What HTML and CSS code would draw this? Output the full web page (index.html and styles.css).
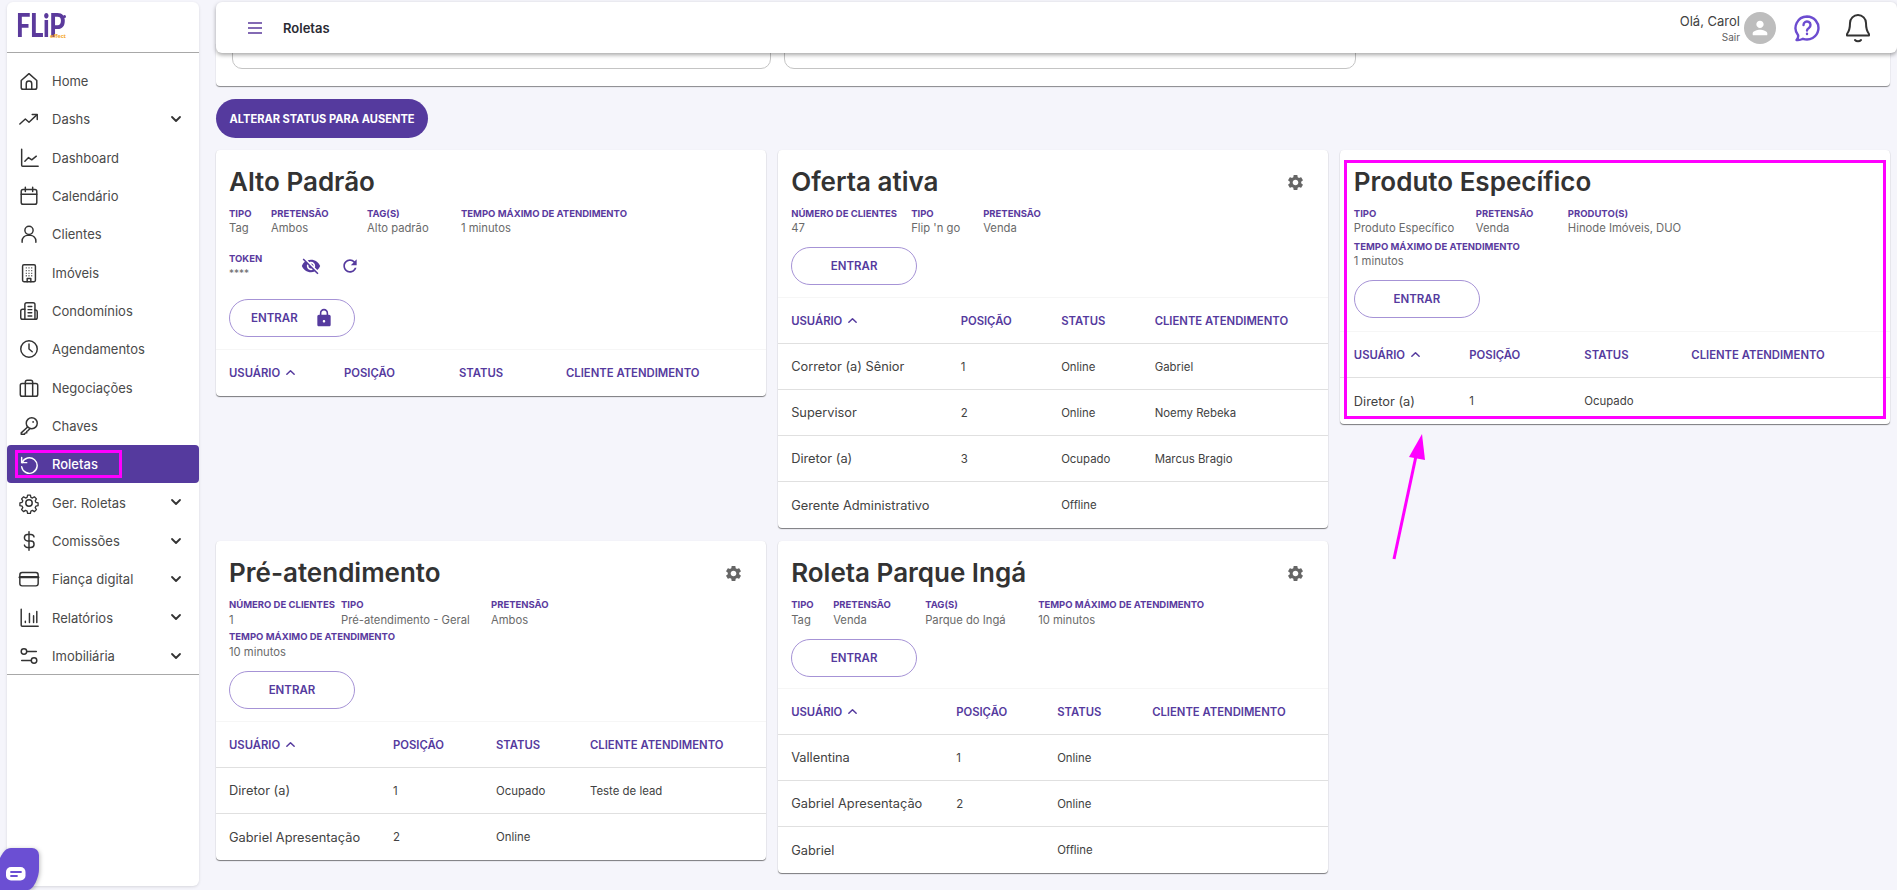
FILE: index.html
```html
<!DOCTYPE html>
<html lang="pt-BR">
<head>
<meta charset="utf-8">
<title>Roletas</title>
<link rel="stylesheet" href="styles.css">
</head>
<body>
<aside class="sidebar">
  <div class="logo"><span class="logo-flip">FLiP</span><span class="logo-dot"></span><span class="logo-effect">effect</span></div>
  <nav class="nav">
    <a class="nav-item"><svg class="ni" viewBox="0 0 24 24"><path d="M3.500 11.500 12 4l8.500 7.500V19a2 2 0 0 1-2 2h-13a2 2 0 0 1-2-2z"/><path d="M9 21v-6a3 3 0 0 1 6 0v6"/></svg><span>Home</span></a>
    <a class="nav-item"><svg class="ni" viewBox="0 0 24 24"><path d="m2 17.500 6-5.500 4 3.500 8.500-8"/><path d="M15.500 7H21v5.500"/></svg><span>Dashs</span><svg class="chev" viewBox="0 0 12 12"><path d="m2 4 4 4 4-4"/></svg></a>
    <a class="nav-item"><svg class="ni" viewBox="0 0 24 24"><path d="M4 2.500V20a1 1 0 0 0 1 1h17"/><path d="m7.500 15.500 4-4 3.500 2.500 5-4"/></svg><span>Dashboard</span></a>
    <a class="nav-item"><svg class="ni" viewBox="0 0 24 24"><rect x="3.500" y="5" width="17" height="16" rx="2"/><path d="M3.500 10h17M8 2.500V7M16 2.500V7"/></svg><span>Calendário</span></a>
    <a class="nav-item"><svg class="ni" viewBox="0 0 24 24"><circle cx="12" cy="8" r="4.500"/><path d="M4.500 21v-1.500a6 6 0 0 1 6-6h3a6 6 0 0 1 6 6V21"/></svg><span>Clientes</span></a>
    <a class="nav-item"><svg class="ni" viewBox="0 0 24 24"><rect x="5" y="3" width="14" height="18.500" rx="1.500"/><path d="M10 21.500V18h4v3.500"/><path class="dots" d="M8.500 6.500h1M11.500 6.500h1M14.500 6.500h1M8.500 9.500h1M11.500 9.500h1M14.500 9.500h1M8.500 12.500h1M11.500 12.500h1M14.500 12.500h1M8.500 15h1M11.500 15h1M14.500 15h1"/></svg><span>Imóveis</span></a>
    <a class="nav-item"><svg class="ni" viewBox="0 0 24 24"><path d="M7.500 21V5a2 2 0 0 1 2-2h7a2 2 0 0 1 2 2v16"/><path d="M7.500 10H5a2 2 0 0 0-2 2v7a2 2 0 0 0 2 2h14a2 2 0 0 0 2-2v-6a2 2 0 0 0-2.500-2"/><path d="M11 7h4M11 10.500h4M11 14h4M11 17.500h4"/></svg><span>Condomínios</span></a>
    <a class="nav-item"><svg class="ni" viewBox="0 0 24 24"><circle cx="12" cy="12" r="9"/><path d="M12 6.500V12l3.500 3"/></svg><span>Agendamentos</span></a>
    <a class="nav-item"><svg class="ni" viewBox="0 0 24 24"><rect x="2.500" y="7" width="19" height="14" rx="2"/><path d="M8 21V5.500a2 2 0 0 1 2-2h4a2 2 0 0 1 2 2V21"/></svg><span>Negociações</span></a>
    <a class="nav-item"><svg class="ni" viewBox="0 0 24 24"><circle cx="15" cy="9" r="6"/><path d="m10.500 13-7 6.500V21H7l1-1.500h1.500V18l1.500-1 2-2"/><circle class="dotfill" cx="16.500" cy="7.500" r="1"/></svg><span>Chaves</span></a>
    <a class="nav-item active"><svg class="ni" viewBox="0 0 24 24"><path d="M4 5v5.500h5.500"/><path d="M4.500 10.500A8.500 8.500 0 1 1 4 15"/></svg><span>Roletas</span><i class="mark-nav"></i></a>
    <a class="nav-item"><svg class="ni" viewBox="0 0 24 24"><path d="M10.300 2.500h3.400l.6 2.700 1.900.8 2.300-1.500 2.500 2.500-1.500 2.300.8 1.900 2.700.6v3.400l-2.700.6-.8 1.900 1.500 2.300-2.500 2.500-2.300-1.500-1.900.8-.6 2.700h-3.400l-.6-2.700-1.900-.8-2.300 1.500-2.500-2.500 1.500-2.300-.8-1.900-2.700-.6v-3.400l2.700-.6.8-1.900-1.500-2.300 2.500-2.500 2.300 1.500 1.900-.8z" transform="translate(1.200 1.200) scale(.9)"/><circle cx="12" cy="12" r="3.500"/></svg><span>Ger. Roletas</span><svg class="chev" viewBox="0 0 12 12"><path d="m2 4 4 4 4-4"/></svg></a>
    <a class="nav-item"><svg class="ni" viewBox="0 0 24 24"><path d="M17.500 7.500A3.500 3.500 0 0 0 14 5h-3.500a3.500 3.500 0 0 0 0 7h3.500a3.500 3.500 0 0 1 0 7h-3.500A3.500 3.500 0 0 1 7 16.500"/><path d="M12 2v20"/></svg><span>Comissões</span><svg class="chev" viewBox="0 0 12 12"><path d="m2 4 4 4 4-4"/></svg></a>
    <a class="nav-item"><svg class="ni" viewBox="0 0 24 24"><rect x="2" y="5" width="20" height="14.500" rx="2.500"/><path d="M2 10h20" class="thick"/></svg><span>Fiança digital</span><svg class="chev" viewBox="0 0 12 12"><path d="m2 4 4 4 4-4"/></svg></a>
    <a class="nav-item"><svg class="ni" viewBox="0 0 24 24"><path d="M3.500 2.500V20a1 1 0 0 0 1 1H22"/><path d="M8 15.500v1.500M12.500 7v10M17 9.500V17M20.500 5v12"/></svg><span>Relatórios</span><svg class="chev" viewBox="0 0 12 12"><path d="m2 4 4 4 4-4"/></svg></a>
    <a class="nav-item"><svg class="ni" viewBox="0 0 24 24"><circle cx="6.500" cy="7" r="3"/><path d="M9.500 7H20"/><circle cx="17.500" cy="17" r="3"/><path d="M14.500 17H4"/></svg><span>Imobiliária</span><svg class="chev" viewBox="0 0 12 12"><path d="m2 4 4 4 4-4"/></svg></a>
  </nav>
</aside>

<main class="main">
  <header class="topbar">
    <svg class="menu" viewBox="0 0 16 14"><path d="M1 2h14M1 7h14M1 12h14"/></svg>
    <h1 class="page-title">Roletas</h1>
    <div class="user">
      <div class="user-text"><span class="hello">Olá, Carol</span><span class="logout">Sair</span></div>
      <div class="avatar"><svg viewBox="0 0 24 24"><path d="M12 12c2.210 0 4-1.790 4-4s-1.790-4-4-4-4 1.790-4 4 1.790 4 4 4zm0 2c-2.670 0-8 1.340-8 4v1a1 1 0 0 0 1 1h14a1 1 0 0 0 1-1v-1c0-2.660-5.330-4-8-4z"/></svg></div>
      <svg class="help" viewBox="0 0 28 28"><path d="M14 2.500A11.500 11.500 0 1 1 10 24.800c-2 1-4.500 1.500-6.500 1.200 1.300-1.300 1.900-3 1.600-4.800A11.500 11.500 0 0 1 14 2.500z"/><path d="M10.500 11a3.500 3.500 0 1 1 5.400 2.900c-1.100.7-1.900 1.400-1.900 2.600"/><path d="M14 19.800v.2"/></svg>
      <svg class="bell" viewBox="0 0 26 30"><path d="M13 2a8 8 0 0 0-8 8c0 6-1 8.500-3 11v1.500h22V21c-2-2.500-3-5-3-11a8 8 0 0 0-8-8z"/><path d="M10 27c1.500 1.600 4.500 1.600 6 0"/></svg>
    </div>
  </header>

  <section class="filters"><div class="filter-box f1"></div><div class="filter-box f2"></div></section>
  <button class="status-btn">ALTERAR STATUS PARA AUSENTE</button>

  <div class="grid">
    <article class="card">
      <div class="card-head"><h2>Alto Padrão</h2></div>
      <div class="meta">
        <div class="m w42"><b>Tipo</b><span>Tag</span></div>
        <div class="m w96"><b>Pretensão</b><span>Ambos</span></div>
        <div class="m w94"><b>Tag(s)</b><span>Alto padrão</span></div>
        <div class="m"><b>Tempo máximo de atendimento</b><span>1 minutos</span></div>
      </div>
      <div class="token">
        <div class="m"><b>Token</b><span class="stars">****</span></div>
        <svg class="tk-icon eye" viewBox="0 0 24 24"><path d="M12 7c2.760 0 5 2.240 5 5 0 .65-.13 1.260-.36 1.830l2.920 2.920c1.510-1.260 2.700-2.890 3.430-4.750-1.730-4.390-6-7.500-11-7.500-1.400 0-2.740.25-3.980.7l2.160 2.160C10.740 7.130 11.350 7 12 7zM2 4.270l2.280 2.280.46.46C3.080 8.300 1.780 10.020 1 12c1.730 4.390 6 7.500 11 7.500 1.550 0 3.030-.3 4.380-.84l.42.42L19.730 22 21 20.730 3.270 3 2 4.270zM7.530 9.800l1.550 1.550c-.05.21-.08.43-.08.65 0 1.660 1.340 3 3 3 .22 0 .44-.03.65-.08l1.550 1.550c-.67.33-1.410.53-2.200.53-2.760 0-5-2.240-5-5 0-.79.2-1.530.53-2.200zm4.310-.78l3.150 3.150.02-.16c0-1.660-1.340-3-3-3l-.17.01z"/></svg>
        <svg class="tk-icon refresh" viewBox="0 0 24 24"><path d="M17.650 6.350C16.200 4.900 14.210 4 12 4c-4.420 0-7.990 3.580-7.990 8s3.570 8 7.990 8c3.730 0 6.840-2.550 7.730-6h-2.080c-.82 2.330-3.040 4-5.650 4-3.310 0-6-2.690-6-6s2.690-6 6-6c1.660 0 3.140.69 4.220 1.780L13 11h7V4l-2.350 2.350z"/></svg>
      </div>
      <button class="enter enter-lock">ENTRAR<svg viewBox="0 0 24 24"><path d="M18 8h-1V6c0-2.760-2.240-5-5-5S7 3.240 7 6v2H6c-1.100 0-2 .9-2 2v10c0 1.100.9 2 2 2h12c1.100 0 2-.9 2-2V10c0-1.100-.9-2-2-2zm-6 9.500c-.83 0-1.500-.67-1.500-1.500s.67-1.500 1.500-1.500 1.500.67 1.500 1.500-.67 1.500-1.500 1.500zM15.100 8H8.900V6c0-1.710 1.390-3.100 3.100-3.100 1.710 0 3.100 1.390 3.100 3.100v2z"/></svg></button>
      <table class="tbl t1">
        <colgroup><col><col><col><col></colgroup>
        <thead><tr><th>Usuário<svg class="sort" viewBox="0 0 12 12"><path d="m2 8 4-4 4 4"/></svg></th><th>Posição</th><th>Status</th><th>Cliente atendimento</th></tr></thead>
      </table>
    </article>

    <article class="card">
      <div class="card-head"><h2>Oferta ativa</h2><svg class="gear" viewBox="0 0 24 24"><path d="M19.140 12.940c.04-.3.06-.61.06-.94 0-.32-.02-.64-.07-.94l2.030-1.580c.18-.14.23-.41.12-.61l-1.920-3.320c-.12-.22-.37-.29-.59-.22l-2.390.96c-.5-.38-1.030-.7-1.620-.94l-.36-2.540c-.04-.24-.24-.41-.48-.41h-3.840c-.24 0-.43.17-.47.41l-.36 2.540c-.59.24-1.130.57-1.620.94l-2.390-.96c-.22-.08-.47 0-.59.22L2.740 8.870c-.12.21-.08.47.12.61l2.030 1.580c-.05.3-.09.63-.09.94s.02.64.07.94l-2.030 1.580c-.18.14-.23.41-.12.61l1.920 3.320c.12.22.37.29.59.22l2.390-.96c.5.38 1.030.7 1.620.94l.36 2.540c.05.24.24.41.48.41h3.840c.24 0 .44-.17.47-.41l.36-2.540c.59-.24 1.130-.56 1.620-.94l2.390.96c.22.08.47 0 .59-.22l1.920-3.320c.12-.22.07-.47-.12-.61l-2.010-1.580zM12 15.600c-1.980 0-3.600-1.620-3.600-3.600s1.620-3.600 3.600-3.600 3.600 1.620 3.600 3.600-1.620 3.600-3.600 3.600z"/></svg></div>
      <div class="meta">
        <div class="m w120"><b>Número de clientes</b><span>47</span></div>
        <div class="m w72"><b>Tipo</b><span>Flip 'n go</span></div>
        <div class="m"><b>Pretensão</b><span>Venda</span></div>
      </div>
      <button class="enter">ENTRAR</button>
      <table class="tbl t2">
        <colgroup><col><col><col><col></colgroup>
        <thead><tr><th>Usuário<svg class="sort" viewBox="0 0 12 12"><path d="m2 8 4-4 4 4"/></svg></th><th>Posição</th><th>Status</th><th>Cliente atendimento</th></tr></thead>
        <tbody>
          <tr><td>Corretor (a) Sênior</td><td>1</td><td>Online</td><td>Gabriel</td></tr>
          <tr><td>Supervisor</td><td>2</td><td>Online</td><td>Noemy Rebeka</td></tr>
          <tr><td>Diretor (a)</td><td>3</td><td>Ocupado</td><td>Marcus Bragio</td></tr>
          <tr><td>Gerente Administrativo</td><td></td><td>Offline</td><td></td></tr>
        </tbody>
      </table>
    </article>

    <article class="card">
      <div class="card-head"><h2>Produto Específico</h2></div>
      <div class="meta">
        <div class="m w122"><b>Tipo</b><span>Produto Específico</span></div>
        <div class="m w92"><b>Pretensão</b><span>Venda</span></div>
        <div class="m"><b>Produto(s)</b><span>Hinode Imóveis, DUO</span></div>
      </div>
      <div class="meta meta-next">
        <div class="m"><b>Tempo máximo de atendimento</b><span>1 minutos</span></div>
      </div>
      <button class="enter">ENTRAR</button>
      <table class="tbl t3">
        <colgroup><col><col><col><col></colgroup>
        <thead><tr><th>Usuário<svg class="sort" viewBox="0 0 12 12"><path d="m2 8 4-4 4 4"/></svg></th><th>Posição</th><th>Status</th><th>Cliente atendimento</th></tr></thead>
        <tbody>
          <tr><td>Diretor (a)</td><td>1</td><td>Ocupado</td><td></td></tr>
        </tbody>
      </table>
      <i class="mark-card"></i>
    </article>

    <article class="card loose">
      <div class="card-head"><h2>Pré-atendimento</h2><svg class="gear" viewBox="0 0 24 24"><path d="M19.140 12.940c.04-.3.06-.61.06-.94 0-.32-.02-.64-.07-.94l2.030-1.580c.18-.14.23-.41.12-.61l-1.920-3.320c-.12-.22-.37-.29-.59-.22l-2.390.96c-.5-.38-1.030-.7-1.620-.94l-.36-2.540c-.04-.24-.24-.41-.48-.41h-3.840c-.24 0-.43.17-.47.41l-.36 2.540c-.59.24-1.130.57-1.620.94l-2.390-.96c-.22-.08-.47 0-.59.22L2.740 8.870c-.12.21-.08.47.12.61l2.030 1.580c-.05.3-.09.63-.09.94s.02.64.07.94l-2.030 1.580c-.18.14-.23.41-.12.61l1.920 3.320c.12.22.37.29.59.22l2.390-.96c.5.38 1.030.7 1.620.94l.36 2.540c.05.24.24.41.48.41h3.840c.24 0 .44-.17.47-.41l.36-2.540c.59-.24 1.130-.56 1.620-.94l2.390.96c.22.08.47 0 .59-.22l1.920-3.320c.12-.22.07-.47-.12-.61l-2.010-1.580zM12 15.600c-1.980 0-3.600-1.620-3.600-3.600s1.620-3.600 3.600-3.600 3.600 1.620 3.600 3.600-1.620 3.600-3.600 3.600z"/></svg></div>
      <div class="meta">
        <div class="m w112"><b>Número de clientes</b><span>1</span></div>
        <div class="m w150"><b>Tipo</b><span>Pré-atendimento - Geral</span></div>
        <div class="m"><b>Pretensão</b><span>Ambos</span></div>
      </div>
      <div class="meta meta-next">
        <div class="m"><b>Tempo máximo de atendimento</b><span>10 minutos</span></div>
      </div>
      <button class="enter">ENTRAR</button>
      <table class="tbl t4">
        <colgroup><col><col><col><col></colgroup>
        <thead><tr><th>Usuário<svg class="sort" viewBox="0 0 12 12"><path d="m2 8 4-4 4 4"/></svg></th><th>Posição</th><th>Status</th><th>Cliente atendimento</th></tr></thead>
        <tbody>
          <tr><td>Diretor (a)</td><td>1</td><td>Ocupado</td><td>Teste de lead</td></tr>
          <tr><td>Gabriel Apresentação</td><td>2</td><td>Online</td><td></td></tr>
        </tbody>
      </table>
    </article>

    <article class="card loose">
      <div class="card-head"><h2>Roleta Parque Ingá</h2><svg class="gear" viewBox="0 0 24 24"><path d="M19.140 12.940c.04-.3.06-.61.06-.94 0-.32-.02-.64-.07-.94l2.030-1.580c.18-.14.23-.41.12-.61l-1.920-3.320c-.12-.22-.37-.29-.59-.22l-2.390.96c-.5-.38-1.030-.7-1.620-.94l-.36-2.540c-.04-.24-.24-.41-.48-.41h-3.840c-.24 0-.43.17-.47.41l-.36 2.540c-.59.24-1.130.57-1.620.94l-2.390-.96c-.22-.08-.47 0-.59.22L2.740 8.870c-.12.21-.08.47.12.61l2.030 1.580c-.05.3-.09.63-.09.94s.02.64.07.94l-2.030 1.580c-.18.14-.23.41-.12.61l1.920 3.320c.12.22.37.29.59.22l2.390-.96c.5.38 1.030.7 1.620.94l.36 2.540c.05.24.24.41.48.41h3.840c.24 0 .44-.17.47-.41l.36-2.540c.59-.24 1.130-.56 1.620-.94l2.390.96c.22.08.47 0 .59-.22l1.920-3.320c.12-.22.07-.47-.12-.61l-2.010-1.580zM12 15.600c-1.980 0-3.600-1.620-3.600-3.600s1.620-3.600 3.600-3.600 3.600 1.620 3.600 3.600-1.620 3.600-3.600 3.600z"/></svg></div>
      <div class="meta">
        <div class="m w42"><b>Tipo</b><span>Tag</span></div>
        <div class="m w92"><b>Pretensão</b><span>Venda</span></div>
        <div class="m w113"><b>Tag(s)</b><span>Parque do Ingá</span></div>
        <div class="m"><b>Tempo máximo de atendimento</b><span>10 minutos</span></div>
      </div>
      <button class="enter">ENTRAR</button>
      <table class="tbl t5">
        <colgroup><col><col><col><col></colgroup>
        <thead><tr><th>Usuário<svg class="sort" viewBox="0 0 12 12"><path d="m2 8 4-4 4 4"/></svg></th><th>Posição</th><th>Status</th><th>Cliente atendimento</th></tr></thead>
        <tbody>
          <tr><td>Vallentina</td><td>1</td><td>Online</td><td></td></tr>
          <tr><td>Gabriel Apresentação</td><td>2</td><td>Online</td><td></td></tr>
          <tr><td>Gabriel</td><td></td><td>Offline</td><td></td></tr>
        </tbody>
      </table>
    </article>
  </div>
</main>

<svg class="arrow" viewBox="0 0 40 130"><path d="M4 127 26 24"/><polygon points="32,2 19,25 35,28"/></svg>

<div class="chat"><svg viewBox="0 0 39 42"><path class="chat-shape" d="M11 0h21a7 7 0 0 1 7 7v14c0 9-6 21-11 21H0V10C3 4 6 0 11 0z"/><rect class="chat-bubble" x="6" y="19" width="19.500" height="13.500" rx="5"/><path class="chat-line" d="M11 24h10M11 28h6"/></svg></div>
</body>
</html>
```

FILE: styles.css
```css
* { box-sizing: border-box; }
html, body { margin: 0; height: 890px; overflow: hidden; }
body {
  display: flex;
  background: #f5f5fb;
  font-family: Inter, "Liberation Sans", sans-serif;
  color: #424242;
  position: relative;
}
h1, h2 { margin: 0; }

/* sidebar */
.sidebar {
  width: 192px;
  height: 884px;
  margin: 2px 0 0 7px;
  background: #fff;
  border-radius: 6px;
  box-shadow: 0 1px 3px rgba(0,0,0,.12);
  flex: none;
}
.logo {
  height: 51px;
  border-bottom: 1px solid #a8a8a8;
  position: relative;
}
.logo-flip {
  position: absolute;
  left: 9px;
  top: 13px;
  font: 900 32px/19px Lato, sans-serif;
  color: #5b3a9c;
  transform: scaleX(.8);
  transform-origin: left center;
  letter-spacing: -.5px;
}
.logo-dot {
  position: absolute; left: 56px; top: 13px;
  width: 3px; height: 3px; border-radius: 2px; background: #5b3a9c;
}
.logo-effect {
  position: absolute; left: 43px; top: 31px;
  font: 700 5.5px/7px "Open Sans", sans-serif;
  color: #f5a623;
}
.nav {
  padding-top: 8.8px;
  height: 622px;
  border-bottom: 1px solid #a8a8a8;
}
.nav-item {
  height: 38.33px;
  display: flex;
  align-items: center;
  padding-left: 11px;
  font-size: 13px;
  color: #4a4a4a;
  position: relative;
}
.nav-item > span { margin-left: 12px; }
.ni {
  width: 22px; height: 22px; flex: none;
  fill: none; stroke: #333; stroke-width: 1.6;
  stroke-linecap: round; stroke-linejoin: round;
}
.ni .dots { stroke-width: 1.4; stroke-linecap: butt; }
.ni .dotfill { fill: #333; stroke: none; }
.ni .thick { stroke-width: 2.6; }
.chev {
  position: absolute; left: 163px; top: 13px;
  width: 12px; height: 12px;
  fill: none; stroke: #333; stroke-width: 1.8;
  stroke-linecap: round; stroke-linejoin: round;
}
.nav-item.active {
  background: #553a9e;
  color: #fff;
  border-radius: 4px;
  font-weight: 500;
}
.nav-item.active .ni { stroke: #fff; }
.mark-nav {
  position: absolute; left: 8px; top: 5px;
  width: 107px; height: 28px;
  border: 3px solid #ff00ff;
}

/* main */
.main {
  flex: 1;
  margin-left: 17px;
  min-width: 0;
}
.topbar {
  position: relative;
  z-index: 2;
  height: 51px;
  margin-top: 2px;
  background: #fff;
  border-radius: 6px;
  box-shadow: 0 2px 4px rgba(0,0,0,.35);
  display: flex;
  align-items: center;
  padding: 0 26px 0 31px;
}
.menu {
  width: 16px; height: 14px; flex: none;
  fill: none; stroke: #5b3a9c; stroke-width: 1.6;
}
.page-title {
  margin-left: 20px;
  font-size: 13px;
  font-weight: 600;
  color: #2b2b33;
}
.user { margin-left: auto; display: flex; align-items: center; }
.user-text { display: flex; flex-direction: column; align-items: flex-end; margin-right: 4px; }
.hello { font-size: 13px; line-height: 18px; color: #424242; }
.logout { font-size: 10px; line-height: 14px; color: #616161; }
.avatar {
  width: 32px; height: 32px; border-radius: 50%;
  background: #bdbdbd;
  display: flex; align-items: center; justify-content: center;
}
.avatar svg { width: 22px; height: 22px; fill: #fff; }
.help {
  width: 28px; height: 28px; margin-left: 17px;
  fill: none; stroke: #6c4cd0; stroke-width: 2.4;
  stroke-linecap: round; stroke-linejoin: round;
}
.bell {
  width: 26px; height: 30px; margin-left: 24px;
  fill: none; stroke: #333; stroke-width: 2;
  stroke-linecap: round; stroke-linejoin: round;
}

.filters {
  margin: -10px 7px 0 0;
  height: 43px;
  padding: 0 16px;
  background: #fff;
  border-radius: 0 0 4px 4px;
  box-shadow: 0 1px 1px rgba(0,0,0,.45);
  display: flex;
  gap: 13px;
}
.filter-box {
  height: 26px;
  border: 1px solid #c4c4c4;
  border-radius: 0 0 10px 10px;
}
.f1 { width: 539px; }
.f2 { width: 572px; }

.status-btn {
  display: block;
  margin-top: 13px;
  width: 212px;
  height: 39px;
  border: 0;
  border-radius: 20px;
  background: #553a9e;
  color: #fff;
  font: 700 11.1px Inter, sans-serif;
  padding: 0;
}

.grid {
  margin: 12px 7px 0 0;
  display: grid;
  grid-template-columns: repeat(3, 1fr);
  gap: 13px 12.5px;
  align-items: start;
}
.card {
  --pad: 13px;
  position: relative;
  background: #fff;
  border-radius: 4px;
  box-shadow: 0 1px 1px rgba(0,0,0,.5), 0 0 1px rgba(0,0,0,.08);
  padding-top: 16px;
}
.card:nth-child(3) { --pad: 13.5px; }
.card-head {
  display: flex;
  justify-content: space-between;
  align-items: center;
  height: 32px;
  padding: 0 23px 0 var(--pad);
}
.card-head h2 {
  font-size: 26px;
  line-height: 32px;
  font-weight: 600;
  color: #333;
  white-space: nowrap;
}
.gear { width: 19px; height: 19px; fill: #666; }

.meta {
  display: flex;
  padding: 0 var(--pad);
  margin-top: 9px;
}
.meta-next { margin-top: 5px; }
.loose .meta-next { margin-top: 3px; }
.m { display: flex; flex-direction: column; flex: none; }
.m b {
  font-size: 9.5px;
  line-height: 14px;
  font-weight: 700;
  color: #5a3a9e;
  text-transform: uppercase;
  white-space: nowrap;
}
.m span {
  font-size: 11.25px;
  line-height: 14px;
  color: #6a6a6a;
  white-space: nowrap;
}
.loose .m span { margin-top: 1px; }
.w42 { width: 42px; }
.w72 { width: 72px; }
.w92 { width: 92px; }
.w94 { width: 94px; }
.w96 { width: 96px; }
.w112 { width: 112px; }
.w113 { width: 113px; }
.w120 { width: 120px; }
.w122 { width: 122px; }
.w150 { width: 150px; }

.token {
  display: flex;
  align-items: center;
  padding: 0 var(--pad);
  margin-top: 17px;
  height: 27px;
}
.m .stars { font-size: 10px; }
.tk-icon { width: 20px; height: 20px; fill: #553a9e; flex: none; }
.eye { margin-left: 39px; }
.refresh { margin-left: 19px; }

.enter {
  display: flex;
  align-items: center;
  justify-content: center;
  width: 126px;
  height: 38px;
  margin: 12px 0 0 var(--pad);
  padding: 0;
  background: #fff;
  border: 1px solid #a693d6;
  border-radius: 19px;
  color: #553a9e;
  font: 600 11.5px Inter, sans-serif;
}
.token + .enter { margin-top: 20px; }
.enter-lock { justify-content: flex-start; padding-left: 21px; }
.enter-lock svg { width: 20px; height: 20px; fill: #553a9e; margin-left: 16px; }

.tbl {
  width: 100%;
  margin-top: 12px;
  table-layout: fixed;
  border-collapse: separate;
  border-spacing: 0;
  border-top: 1px solid #f6f6f6;
}
.tbl.t5 { margin-top: 11px; }
.tbl.t3 { margin-top: 13px; }
.tbl th, .tbl td { padding: 0; text-align: left; }
.tbl th:first-child, .tbl td:first-child { padding-left: var(--pad); }
.tbl th {
  height: 46px;
  font-size: 11.3px;
  font-weight: 600;
  color: #553a9e;
  text-transform: uppercase;
  white-space: nowrap;
}
.t2 th, .t3 th, .t4 th, .t5 th { border-bottom: 1px solid #e0e0e0; }
.tbl td {
  height: 46px;
  font-size: 11.4px;
  color: #424242;
  border-bottom: 1px solid #e0e0e0;
}
.tbl td:first-child { font-size: 12.8px; }
.tbl tr:last-child td { border-bottom: 0; }
.sort {
  width: 11px; height: 11px; margin-left: 5px;
  vertical-align: -1px;
  fill: none; stroke: #553a9e; stroke-width: 1.6;
  stroke-linecap: round; stroke-linejoin: round;
}
.t1 col:nth-child(1) { width: 128px; }
.t1 col:nth-child(2) { width: 115px; }
.t1 col:nth-child(3) { width: 107px; }
.t2 col:nth-child(1) { width: 182.5px; }
.t2 col:nth-child(2) { width: 100.5px; }
.t2 col:nth-child(3) { width: 93.5px; }
.t3 col:nth-child(1) { width: 129px; }
.t3 col:nth-child(2) { width: 115px; }
.t3 col:nth-child(3) { width: 107px; }
.t4 col:nth-child(1) { width: 177px; }
.t4 col:nth-child(2) { width: 103px; }
.t4 col:nth-child(3) { width: 94px; }
.t5 col:nth-child(1) { width: 178px; }
.t5 col:nth-child(2) { width: 101px; }
.t5 col:nth-child(3) { width: 95px; }

/* annotations */
.mark-card {
  position: absolute;
  left: 4px; top: 10px;
  width: 542px; height: 259px;
  border: 3px solid #ff00ff;
  pointer-events: none;
}
.arrow {
  position: absolute;
  left: 1390px; top: 432px;
  width: 40px; height: 130px;
}
.arrow path { stroke: #ff00ff; stroke-width: 3; fill: none; }
.arrow polygon { fill: #ff00ff; }

.chat {
  position: absolute;
  left: 0; top: 848px;
  width: 39px; height: 42px;
  filter: drop-shadow(1px 1px 2px rgba(0,0,0,.25));
}
.chat svg { display: block; width: 39px; height: 42px; }
.chat-shape { fill: #6b4fd3; }
.chat-bubble { fill: #fff; }
.chat-line { stroke: #6b4fd3; stroke-width: 1.8; fill: none; stroke-linecap: round; }
```
